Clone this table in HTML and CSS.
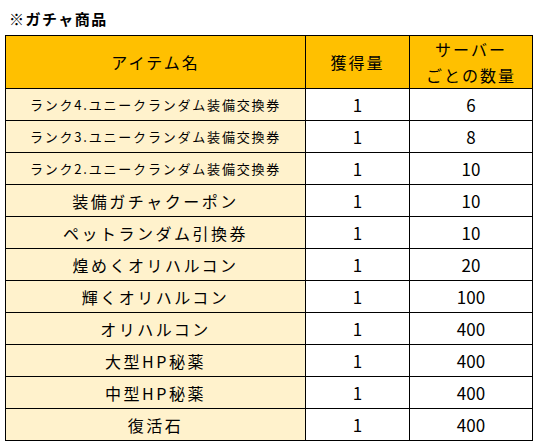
FILE: index.html
```html
<!DOCTYPE html>
<html lang="ja">
<head>
<meta charset="utf-8">
<link rel="stylesheet" href="styles.css">
</head>
<body>
<div class="page">
  <div class="title">※ガチャ商品</div>
  <table class="gacha">
    <colgroup>
      <col class="c-name">
      <col class="c-get">
      <col class="c-qty">
    </colgroup>
    <thead>
      <tr class="head">
        <th>アイテム名</th>
        <th>獲得量</th>
        <th class="two">サーバー<br>ごとの数量</th>
      </tr>
    </thead>
    <tbody>
      <tr><td class="name small">ランク4.ユニークランダム装備交換券</td><td>1</td><td>6</td></tr>
      <tr><td class="name small">ランク3.ユニークランダム装備交換券</td><td>1</td><td>8</td></tr>
      <tr><td class="name small">ランク2.ユニークランダム装備交換券</td><td>1</td><td>10</td></tr>
      <tr><td class="name">装備ガチャクーポン</td><td>1</td><td>10</td></tr>
      <tr><td class="name">ペットランダム引換券</td><td>1</td><td>10</td></tr>
      <tr><td class="name">煌めくオリハルコン</td><td>1</td><td>20</td></tr>
      <tr><td class="name">輝くオリハルコン</td><td>1</td><td>100</td></tr>
      <tr><td class="name">オリハルコン</td><td>1</td><td>400</td></tr>
      <tr><td class="name">大型HP秘薬</td><td>1</td><td>400</td></tr>
      <tr><td class="name">中型HP秘薬</td><td>1</td><td>400</td></tr>
      <tr><td class="name">復活石</td><td>1</td><td>400</td></tr>
    </tbody>
  </table>
</div>
</body>
</html>
```
FILE: styles.css
```css
html, body {
  margin: 0;
  padding: 0;
  background: #fff;
}
body {
  font-family: "Noto Sans CJK JP", "Noto Sans", sans-serif;
  color: #000;
}
.page {
  padding: 9px 5px 0 5px;
}
.title {
  font-size: 15px;
  font-weight: bold;
  line-height: 20px;
  height: 26px;
  padding-left: 4px;
  letter-spacing: 1.5px;
}
.gacha {
  border-collapse: collapse;
  table-layout: fixed;
  width: 527px;
}
.c-name { width: 300px; }
.c-get { width: 104px; }
.c-qty { width: 123px; }
.gacha th, .gacha td {
  border: 1px solid #000;
  padding: 0;
  text-align: center;
  vertical-align: middle;
}
.head th {
  background: #ffc000;
  height: 51px;
  font-weight: normal;
  font-size: 16px;
  letter-spacing: 2px;
  line-height: 26px;
}
.gacha tbody td {
  box-sizing: border-box;
  height: 32px;
  font-size: 17px;
  line-height: 20px;
}
.gacha td.name {
  background: #fff2cc;
  font-size: 16px;
  letter-spacing: 2.5px;
}
.gacha td.name.small {
  font-size: 13px;
  letter-spacing: 1.8px;
}
```
